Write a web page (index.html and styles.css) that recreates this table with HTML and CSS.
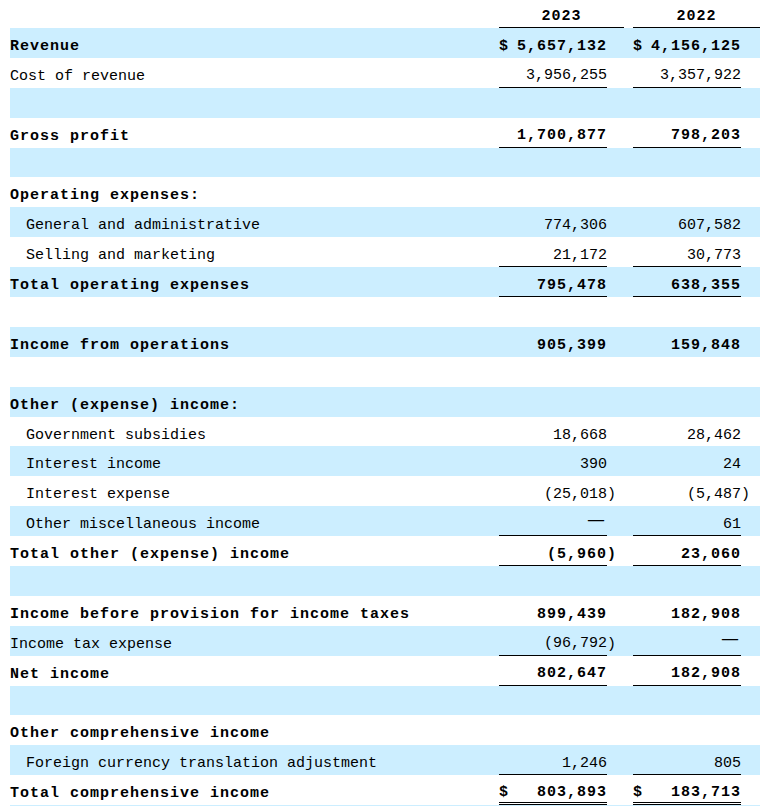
FILE: index.html
```html
<!DOCTYPE html>
<html lang="en">
<head>
<meta charset="utf-8">
<title>Statements of Operations</title>
<link rel="stylesheet" href="styles.css">
</head>
<body>
<table class="fin">
  <colgroup>
    <col class="c-label">
    <col class="c-num">
    <col class="c-par">
    <col class="c-gap">
    <col class="c-num">
    <col class="c-par2">
  </colgroup>
  <thead>
    <tr>
      <th class="blank"></th>
      <th class="yr" colspan="2">2023</th>
      <th class="blank"></th>
      <th class="yr" colspan="2">2022</th>
    </tr>
  </thead>
  <tbody>
    <tr class="b">
      <td class="lbl">Revenue</td>
      <td class="n"><div class="cash"><span>$</span><span>5,657,132</span></div></td><td class="p"></td><td></td>
      <td class="n"><div class="cash"><span>$</span><span>4,156,125</span></div></td><td class="p"></td>
    </tr>
    <tr>
      <td class="lbl">Cost of revenue</td>
      <td class="n u">3,956,255</td><td class="p"></td><td></td>
      <td class="n u">3,357,922</td><td class="p"></td>
    </tr>
    <tr class="sp"><td colspan="6"></td></tr>
    <tr class="b">
      <td class="lbl">Gross profit</td>
      <td class="n u">1,700,877</td><td class="p"></td><td></td>
      <td class="n u">798,203</td><td class="p"></td>
    </tr>
    <tr class="sp"><td colspan="6"></td></tr>
    <tr class="b">
      <td class="lbl" colspan="6">Operating expenses:</td>
    </tr>
    <tr>
      <td class="lbl ind">General and administrative</td>
      <td class="n">774,306</td><td class="p"></td><td></td>
      <td class="n">607,582</td><td class="p"></td>
    </tr>
    <tr>
      <td class="lbl ind">Selling and marketing</td>
      <td class="n u">21,172</td><td class="p"></td><td></td>
      <td class="n u">30,773</td><td class="p"></td>
    </tr>
    <tr class="b">
      <td class="lbl">Total operating expenses</td>
      <td class="n u">795,478</td><td class="p"></td><td></td>
      <td class="n u">638,355</td><td class="p"></td>
    </tr>
    <tr class="sp"><td colspan="6"></td></tr>
    <tr class="b">
      <td class="lbl">Income from operations</td>
      <td class="n">905,399</td><td class="p"></td><td></td>
      <td class="n">159,848</td><td class="p"></td>
    </tr>
    <tr class="sp"><td colspan="6"></td></tr>
    <tr class="b">
      <td class="lbl" colspan="6">Other (expense) income:</td>
    </tr>
    <tr>
      <td class="lbl ind">Government subsidies</td>
      <td class="n">18,668</td><td class="p"></td><td></td>
      <td class="n">28,462</td><td class="p"></td>
    </tr>
    <tr>
      <td class="lbl ind">Interest income</td>
      <td class="n">390</td><td class="p"></td><td></td>
      <td class="n">24</td><td class="p"></td>
    </tr>
    <tr>
      <td class="lbl ind">Interest expense</td>
      <td class="n">(25,018</td><td class="p">)</td><td></td>
      <td class="n">(5,487</td><td class="p">)</td>
    </tr>
    <tr>
      <td class="lbl ind">Other miscellaneous income</td>
      <td class="n u"><span class="dash">—</span></td><td class="p"></td><td></td>
      <td class="n u">61</td><td class="p"></td>
    </tr>
    <tr class="b">
      <td class="lbl">Total other (expense) income</td>
      <td class="n u">(5,960</td><td class="p">)</td><td></td>
      <td class="n u">23,060</td><td class="p"></td>
    </tr>
    <tr class="sp"><td colspan="6"></td></tr>
    <tr class="b">
      <td class="lbl">Income before provision for income taxes</td>
      <td class="n">899,439</td><td class="p"></td><td></td>
      <td class="n">182,908</td><td class="p"></td>
    </tr>
    <tr>
      <td class="lbl">Income tax expense</td>
      <td class="n u">(96,792</td><td class="p">)</td><td></td>
      <td class="n u"><span class="dash">—</span></td><td class="p"></td>
    </tr>
    <tr class="b">
      <td class="lbl">Net income</td>
      <td class="n u">802,647</td><td class="p"></td><td></td>
      <td class="n u">182,908</td><td class="p"></td>
    </tr>
    <tr class="sp"><td colspan="6"></td></tr>
    <tr class="b">
      <td class="lbl" colspan="6">Other comprehensive income</td>
    </tr>
    <tr>
      <td class="lbl ind">Foreign currency translation adjustment</td>
      <td class="n u">1,246</td><td class="p"></td><td></td>
      <td class="n u">805</td><td class="p"></td>
    </tr>
    <tr class="b">
      <td class="lbl">Total comprehensive income</td>
      <td class="n uu"><div class="cash"><span>$</span><span>803,893</span></div></td><td class="p"></td><td></td>
      <td class="n uu"><div class="cash"><span>$</span><span>183,713</span></div></td><td class="p"></td>
    </tr>
    <tr class="sp"><td colspan="6"></td></tr>
  </tbody>
</table>
</body>
</html>
```
FILE: styles.css
```css
html, body {
  margin: 0;
  padding: 0;
  background: #ffffff;
}

body {
  font-family: "Liberation Mono", "DejaVu Sans Mono", monospace;
  font-size: 15px;
  color: #000000;
}

.fin {
  margin-left: 10px;
  width: 750px;
  table-layout: fixed;
  border-collapse: separate;
  border-spacing: 0;
}

.c-label { width: 489px; }
.c-num { width: 108px; }
.c-par { width: 17px; }
.c-gap { width: 9px; }
.c-par2 { width: 19px; }

.fin thead tr {
  height: 28px;
}

.fin th {
  padding: 7px 0 0 0;
  font-weight: bold;
  letter-spacing: 1px;
  text-align: center;
  vertical-align: middle;
  line-height: 18px;
}

.fin th.yr {
  border-bottom: 1px solid #000000;
}

.fin tbody tr {
  height: 29.9px;
}

.fin tbody tr:nth-child(odd) {
  background: #cceeff;
}

.fin td {
  padding: 8px 0 0 0;
  vertical-align: middle;
  white-space: nowrap;
  line-height: 18px;
}

.fin tr.sp td {
  padding: 0;
}

.fin tr.b td {
  font-weight: bold;
  letter-spacing: 1px;
}

.lbl {
  text-align: left;
}

.lbl.ind {
  padding-left: 16px;
}

.n {
  text-align: right;
}

.n.u {
  border-bottom: 1px solid #000000;
}

.n.uu {
  border-bottom: 3px double #000000;
}

.p {
  text-align: left;
}

.cash {
  display: flex;
  justify-content: space-between;
}

.dash {
  font-family: "DejaVu Sans", sans-serif;
  font-size: 18px;
  line-height: 0;
  font-weight: normal;
  letter-spacing: 0;
  margin-right: 2px;
  vertical-align: 3px;
}
```
